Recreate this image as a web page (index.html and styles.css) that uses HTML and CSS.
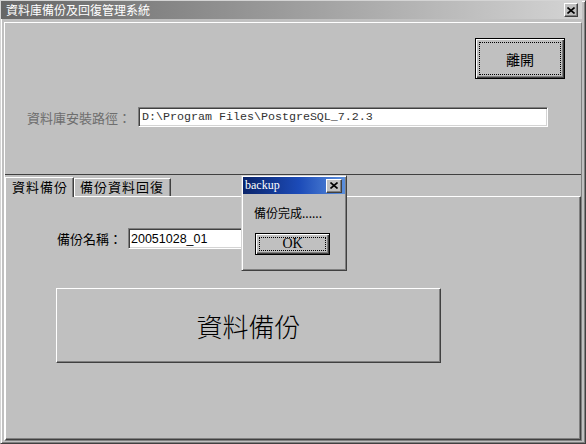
FILE: index.html
```html
<!DOCTYPE html>
<html lang="zh-Hant">
<head>
  <meta charset="UTF-8">
  <title>資料庫備份及回復管理系統</title>
  <link rel="stylesheet" href="styles.css">
</head>
<body>
  <div class="window">
    <div class="titlebar">
      <span class="title">資料庫備份及回復管理系統</span>
      <span class="close-btn">
        <svg width="8" height="7" viewBox="0 0 8 7"><path d="M0.5 0.5L7.5 6.5M7.5 0.5L0.5 6.5" stroke="#000" stroke-width="1.6"/></svg>
      </span>
    </div>

    <div class="client">
      <div class="top-pane">
        <div class="exit-row">
          <button class="btn btn-default btn-exit"><span class="focus">離開</span></button>
        </div>
        <div class="path-row">
          <label class="path-label">資料庫安裝路徑：</label>
          <div class="field path-field">D:\Program Files\PostgreSQL_7.2.3</div>
        </div>
      </div>

      <div class="tabs">
        <div class="tab-strip">
          <div class="tab active">資料備份</div>
          <div class="tab">備份資料回復</div>
        </div>
        <div class="tab-panel">
          <div class="name-row">
            <label class="name-label">備份名稱：</label>
            <div class="field name-field">20051028_01</div>
          </div>
          <button class="btn btn-big">資料備份</button>
        </div>
      </div>
    </div>

    <div class="dialog">
      <div class="dlg-title">
        <span>backup</span>
        <span class="close-btn dlg-close">
          <svg width="8" height="7" viewBox="0 0 8 7"><path d="M0.5 0.5L7.5 6.5M7.5 0.5L0.5 6.5" stroke="#000" stroke-width="1.6"/></svg>
        </span>
      </div>
      <div class="dlg-msg">備份完成......</div>
      <button class="btn btn-default btn-ok"><span class="focus">OK</span></button>
    </div>
  </div>
</body>
</html>
```

FILE: styles.css
```css
body {
  margin: 0;
  background: #c0c0c0;
  font-family: "Noto Sans CJK TC", sans-serif;
}

.window {
  position: relative;
  width: 586px;
  height: 444px;
  box-sizing: border-box;
  display: flex;
  flex-direction: column;
  background: #c0c0c0;
  border: 1px solid;
  border-color: #d4d4d4 #404040 #404040 #d4d4d4;
  box-shadow: inset 1px 1px #fff, inset -1px -1px #808080;
  padding: 0 3px 2px 0;
}

.titlebar {
  height: 18px;
  flex: none;
  display: flex;
  align-items: center;
  justify-content: space-between;
  padding: 0 4px 0 5px;
  background: linear-gradient(to right, #666, #d4d4d4);
  color: #fff;
  font-size: 12px;
  line-height: 18px;
}

.close-btn {
  width: 14px;
  height: 14px;
  box-sizing: border-box;
  display: flex;
  align-items: center;
  justify-content: center;
  background: #c0c0c0;
  border: 1px solid;
  border-color: #fff #404040 #404040 #fff;
  box-shadow: inset -1px -1px #808080;
}

.client {
  flex: 1;
  display: flex;
  flex-direction: column;
  margin: 3px 0 0 3px;
  border: 1px solid;
  border-color: #fff #808080 #808080 #fff;
}

.top-pane {
  height: 152px;
  box-sizing: border-box;
  border-bottom: 1px solid #404040;
}

.exit-row {
  display: flex;
  justify-content: flex-end;
  padding: 15px 16px 0 0;
}

.btn {
  box-sizing: border-box;
  padding: 0;
  background: #c0c0c0;
  color: #000;
  font-family: inherit;
  border: 1px solid;
  border-color: #fff #404040 #404040 #fff;
  box-shadow: inset -1px -1px #808080;
}

.btn-default {
  display: flex;
  border: 1px solid #000;
  box-shadow: inset 1px 1px #fff, inset -1px -1px #404040, inset -2px -2px #808080;
}

.focus {
  flex: 1;
  display: flex;
  align-items: center;
  justify-content: center;
  margin: 3px;
  border: 1px dotted #000;
}

.btn-exit {
  width: 90px;
  height: 41px;
  font-size: 14px;
}

.path-row {
  display: flex;
  align-items: center;
  margin-top: 28px;
  padding-left: 22px;
}

.path-label {
  width: 111px;
  color: #6e6e6e;
  font-size: 13px;
}

.field {
  box-sizing: border-box;
  background: #fff;
  border: 1px solid;
  border-color: #808080 #fff #fff #808080;
  box-shadow: inset 1px 1px #404040, inset -1px -1px #d4d4d4;
  display: flex;
  align-items: center;
  color: #000;
}

.path-field {
  width: 410px;
  height: 20px;
  padding-left: 3px;
  font-family: "Liberation Mono", monospace;
  font-size: 11.67px;
  color: #333;
}

.tabs {
  flex: 1;
  display: flex;
  flex-direction: column;
}

.tab-strip {
  height: 21px;
  display: flex;
  align-items: flex-end;
}

.tab {
  box-sizing: border-box;
  height: 18px;
  width: 97px;
  padding-left: 5px;
  font-size: 13px;
  letter-spacing: 1px;
  line-height: 16px;
  border: 1px solid;
  border-bottom: 0;
  border-color: #fff #404040 #fff #fff;
  box-shadow: inset -1px 0 #808080;
}

.tab.active {
  position: relative;
  z-index: 1;
  width: 69px;
  height: 20px;
  margin-bottom: -1px;
  padding-left: 6px;
  line-height: 18px;
  background: #c0c0c0;
}

.tab-panel {
  flex: 1;
  display: flex;
  flex-direction: column;
  align-items: flex-start;
  border: 1px solid;
  border-color: #fff #404040 #404040 #fff;
  box-shadow: inset -1px -1px #808080;
}

.name-row {
  display: flex;
  align-items: center;
  margin-top: 31px;
  padding-left: 51px;
}

.name-label {
  width: 71px;
  font-size: 13px;
}

.name-field {
  width: 140px;
  height: 21px;
  padding-left: 2px;
  font-family: "Liberation Sans", sans-serif;
  font-size: 12.5px;
}

.btn-big {
  width: 385px;
  height: 75px;
  margin: 39px 0 0 50px;
  font-size: 26px;
  font-weight: 300;
}

.dialog {
  position: absolute;
  left: 240px;
  top: 174px;
  width: 106px;
  height: 96px;
  box-sizing: border-box;
  padding: 1px;
  background: #c0c0c0;
  border: 1px solid;
  border-color: #d4d4d4 #404040 #404040 #d4d4d4;
  box-shadow: inset 1px 1px #fff, inset -1px -1px #808080;
}

.dlg-title {
  height: 17px;
  display: flex;
  align-items: center;
  justify-content: space-between;
  padding: 0 3px 0 2px;
  background: linear-gradient(to right, #0a246a, #1c4bb8 55%, #5b8fdc);
  color: #fff;
  font-family: "Liberation Serif", serif;
  font-size: 12px;
}

.dlg-close {
  width: 16px;
}

.dlg-msg {
  padding: 11px 0 0 11px;
  font-size: 12px;
  line-height: 16px;
}

.btn-ok {
  width: 75px;
  height: 22px;
  margin: 12px 0 0 12px;
  font-family: "Liberation Serif", serif;
  font-size: 14px;
}
```
